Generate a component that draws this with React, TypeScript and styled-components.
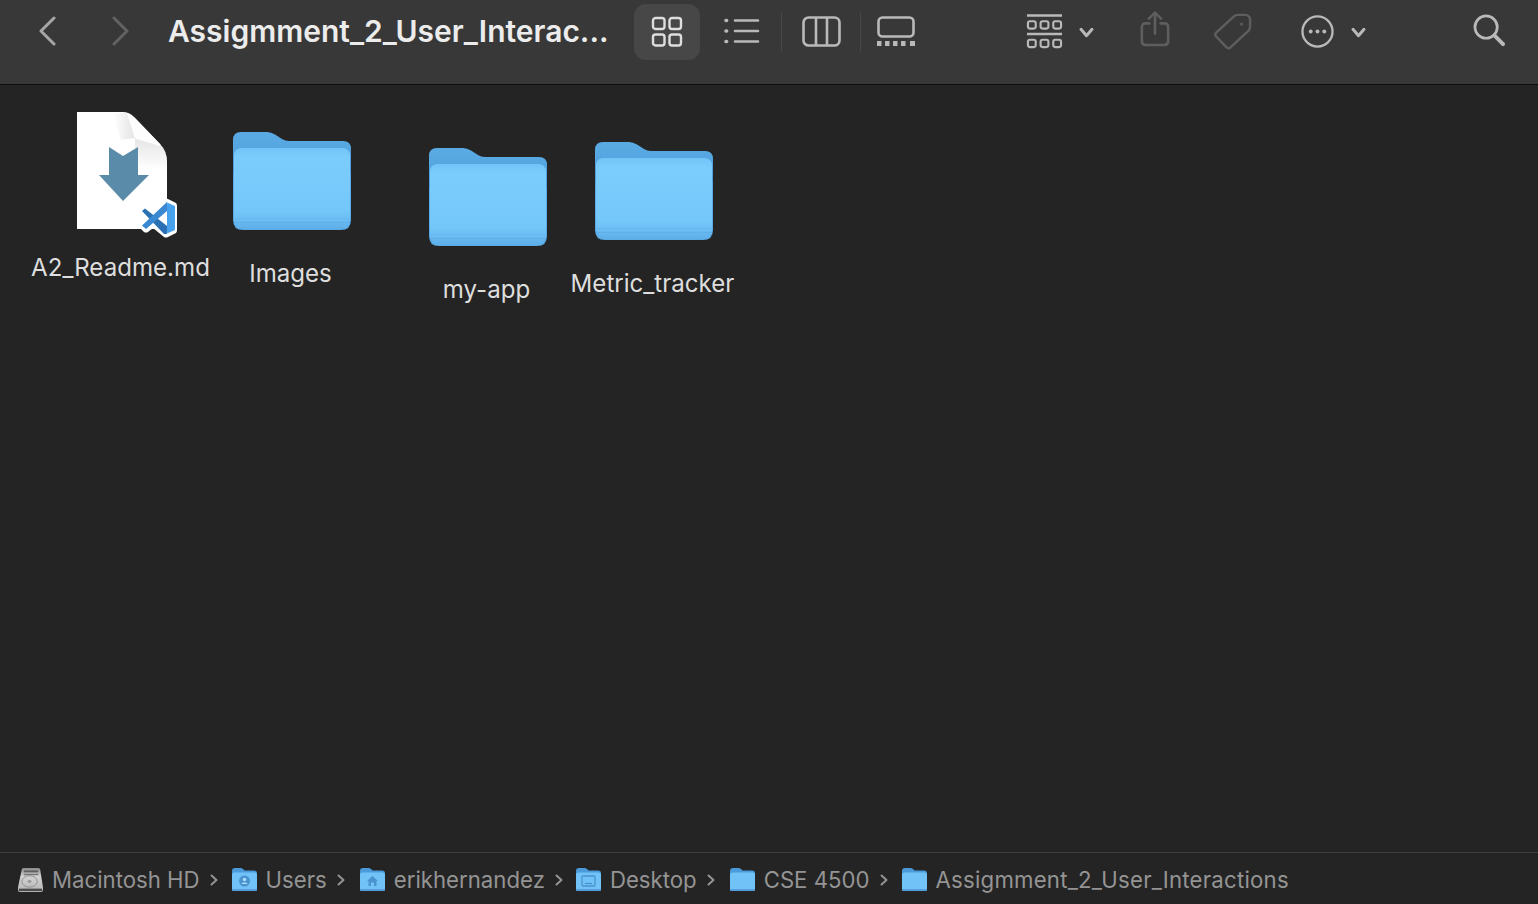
import React from 'react'
import styled, { createGlobalStyle } from 'styled-components'

const GlobalStyle = createGlobalStyle`
  html, body {
    margin: 0;
    padding: 0;
    background: #242424;
    font-family: Inter, "Liberation Sans", sans-serif;
  }
`

const Window = styled.div`
  width: 1538px;
  height: 904px;
  display: flex;
  flex-direction: column;
  overflow: hidden;
  background: #242424;
`

const Toolbar = styled.div`
  height: 85px;
  flex: none;
  box-sizing: border-box;
  display: flex;
  align-items: flex-start;
  background: #383838;
  border-bottom: 1px solid #0c0c0c;
`

const ToolSlot = styled.div<{ $left: number; $top: number }>`
  flex: none;
  display: flex;
  margin-left: ${(p) => p.$left}px;
  margin-top: ${(p) => p.$top}px;
`

const Title = styled.div`
  flex: none;
  width: 442px;
  margin-left: 37px;
  margin-top: 12px;
  font-size: 30px;
  line-height: 38px;
  font-weight: 600;
  color: #ececec;
  white-space: nowrap;
`

const ViewButton = styled.div`
  flex: none;
  width: 66px;
  height: 56px;
  margin-left: 24px;
  margin-top: 4px;
  border-radius: 12px;
  background: #474747;
  display: flex;
  align-items: center;
  justify-content: center;
`

const Divider = styled.div<{ $left: number }>`
  flex: none;
  width: 1px;
  height: 40px;
  margin-left: ${(p) => p.$left}px;
  margin-top: 12px;
  background: #484848;
`

const Canvas = styled.div`
  flex: 1;
  position: relative;
  background: #242424;
`

const FileItem = styled.div<{ $x: number; $y: number }>`
  position: absolute;
  left: ${(p) => p.$x}px;
  top: ${(p) => p.$y}px;
  width: 200px;
  display: flex;
  flex-direction: column;
  align-items: center;
`

const IconHolder = styled.div<{ $shift: number }>`
  display: flex;
  margin-left: ${(p) => p.$shift}px;
`

const FileLabel = styled.div<{ $gap: number }>`
  margin-top: ${(p) => p.$gap}px;
  margin-left: 1px;
  font-size: 24.1px;
  line-height: 30px;
  color: #dedede;
  white-space: nowrap;
`

const PathBar = styled.div`
  height: 52px;
  flex: none;
  box-sizing: border-box;
  display: flex;
  align-items: center;
  padding-left: 18px;
  padding-top: 2px;
  background: #242424;
  border-top: 1px solid #3e3e3e;
`

const Crumb = styled.div<{ $gap: number }>`
  display: flex;
  align-items: center;
  margin-right: ${(p) => p.$gap}px;
`

const CrumbText = styled.span<{ $spacing: number }>`
  margin-left: 9px;
  font-size: 22.2px;
  letter-spacing: ${(p) => p.$spacing}px;
  line-height: 30px;
  color: #949494;
  white-space: nowrap;
`

const CrumbArrow = styled.svg`
  margin-left: 10px;
  flex: none;
`

const stroke = '#b9b9b9'
const dim = '#5e5e5e'

const Chevron = ({ dir, color }: { dir: 'left' | 'right'; color: string }) => (
  <svg width="20" height="30" viewBox="0 0 20 30" fill="none">
    <path d={dir === 'left' ? 'M17 2 L4 15 L17 28' : 'M3 2 L16 15 L3 28'} stroke={color} strokeWidth="3" strokeLinecap="round" strokeLinejoin="round" />
  </svg>
)

const GridIcon = () => (
  <svg width="32" height="32" viewBox="0 0 32 32" fill="none" stroke="#dedede" strokeWidth="2.4">
    <rect x="2" y="2" width="11.5" height="11" rx="2.5" />
    <rect x="18.5" y="2" width="11.5" height="11" rx="2.5" />
    <rect x="2" y="18.5" width="11.5" height="11" rx="2.5" />
    <rect x="18.5" y="18.5" width="11.5" height="11" rx="2.5" />
  </svg>
)

const ListIcon = () => (
  <svg width="36" height="28" viewBox="0 0 36 28" fill="none" stroke={stroke} strokeWidth="2.6" strokeLinecap="round">
    <path d="M11 3.5 H34 M11 14 H34 M11 24.5 H34" />
    <path d="M2 3.5 H2.6 M2 14 H2.6 M2 24.5 H2.6" strokeWidth="3.6" />
  </svg>
)

const ColumnsIcon = () => (
  <svg width="39" height="31" viewBox="0 0 39 31" fill="none" stroke={stroke} strokeWidth="2.6">
    <rect x="1.5" y="1.5" width="36" height="28" rx="5" />
    <path d="M14 1.5 V29.5 M25 1.5 V29.5" />
  </svg>
)

const GalleryIcon = () => (
  <svg width="38" height="30" viewBox="0 0 38 30" fill="none">
    <rect x="1.5" y="1.5" width="35" height="19" rx="4" stroke={stroke} strokeWidth="2.6" />
    <g fill={stroke}>
      <rect x="0" y="25" width="4.5" height="5" />
      <rect x="8" y="25" width="4.5" height="5" />
      <rect x="16" y="25" width="4.5" height="5" />
      <rect x="24" y="25" width="4.5" height="5" />
      <rect x="33" y="25" width="5" height="5" />
    </g>
  </svg>
)

const GroupIcon = () => (
  <svg width="37" height="36" viewBox="0 0 38 36" fill="none" stroke={stroke} strokeWidth="2.2">
    <path d="M1 2 H37 M1 21 H37" strokeWidth="2.6" />
    <rect x="2" y="8" width="8" height="7.5" rx="2" />
    <rect x="15" y="8" width="8" height="7.5" rx="2" />
    <rect x="28" y="8" width="8" height="7.5" rx="2" />
    <rect x="2" y="27" width="8" height="7.5" rx="2" />
    <rect x="15" y="27" width="8" height="7.5" rx="2" />
    <rect x="28" y="27" width="8" height="7.5" rx="2" />
  </svg>
)

const SmallChevron = () => (
  <svg width="15" height="11" viewBox="0 0 16 12" fill="none">
    <path d="M2 2.5 L8 9.5 L14 2.5" stroke={stroke} strokeWidth="3.2" strokeLinecap="round" strokeLinejoin="round" />
  </svg>
)

const ShareIcon = () => (
  <svg width="30" height="36" viewBox="0 0 32 38" fill="none" stroke={dim} strokeWidth="2.8" strokeLinecap="round" strokeLinejoin="round">
    <path d="M10 13 H6 Q2 13 2 17 V32 Q2 36 6 36 H26 Q30 36 30 32 V17 Q30 13 26 13 H22" />
    <path d="M16 24 V2 M9.5 8 L16 1.5 L22.5 8" />
  </svg>
)

const TagIcon = () => (
  <svg width="38" height="37" viewBox="0 0 40 38" fill="none" stroke={dim} strokeWidth="2.6" strokeLinejoin="round">
    <path d="M25 1.5 L33 1.5 Q37.5 2 38 6 L38 14 Q38 16 36.5 18 L17 36 Q15 37.5 13 35.5 L2 24 Q0.5 22 2.5 20 L21 3 Q23 1.5 25 1.5 Z" />
    <circle cx="29" cy="11" r="1.6" fill={dim} stroke="none" />
  </svg>
)

const MoreIcon = () => (
  <svg width="33" height="33" viewBox="0 0 34 34" fill="none">
    <circle cx="17" cy="17" r="15.5" stroke={stroke} strokeWidth="2.4" />
    <circle cx="10" cy="17" r="2" fill={stroke} />
    <circle cx="17" cy="17" r="2" fill={stroke} />
    <circle cx="24" cy="17" r="2" fill={stroke} />
  </svg>
)

const SearchIcon = () => (
  <svg width="33" height="33" viewBox="0 0 34 34" fill="none" stroke={stroke} strokeLinecap="round">
    <circle cx="13.5" cy="13.5" r="11.5" strokeWidth="2.8" />
    <path d="M22 22 L31 31" strokeWidth="4" />
  </svg>
)

const Folder = () => (
  <svg width="118" height="98" viewBox="0 0 118 98">
    <defs>
      <linearGradient id="folderFront" x1="0" y1="0" x2="0" y2="1">
        <stop offset="0" stopColor="#72c4f8" />
        <stop offset="0.12" stopColor="#7acdfc" />
        <stop offset="0.78" stopColor="#74c7f9" />
        <stop offset="0.88" stopColor="#6cbef4" />
        <stop offset="1" stopColor="#5eaee8" />
      </linearGradient>
      <linearGradient id="folderBack" x1="0" y1="0" x2="0" y2="1">
        <stop offset="0" stopColor="#5aabe4" />
        <stop offset="1" stopColor="#4f9edb" />
      </linearGradient>
    </defs>
    <path
      d="M0 8 Q0 0 8 0 H34 Q38 0 42 2.5 L49 7 Q52 9 56 9 H110 Q118 9 118 17 V40 H0 Z"
      fill="url(#folderBack)"
    />
    <path d="M0 40 H118 V88 Q118 98 108 98 H10 Q0 98 0 88 Z" fill="#5aaae5" />
    <path
      d="M1 24 Q1 16 9 16 H109 Q117 16 117 24 V87 Q117 97 107 97 H11 Q1 97 1 87 Z"
      fill="url(#folderFront)"
    />
    <rect x="1" y="86" width="116" height="1" fill="#62b2ec" opacity="0.6" />
    <rect x="1" y="90" width="116" height="1" fill="#5aaae5" opacity="0.6" />
  </svg>
)

const ReadmeIcon = () => (
  <svg width="100" height="126" viewBox="0 0 100 126">
    <defs>
      <linearGradient id="docSide" x1="0" y1="0" x2="1" y2="0">
        <stop offset="0" stopColor="#ffffff" />
        <stop offset="1" stopColor="#d8d8d8" />
      </linearGradient>
      <linearGradient id="docUnder" x1="0" y1="0" x2="0" y2="1">
        <stop offset="0" stopColor="#cfcfcf" />
        <stop offset="1" stopColor="#ffffff" />
      </linearGradient>
    </defs>
    <path d="M0 0 H46 Q52 0 57 5 L82 31 Q90 39 90 50 V117 H0 Z" fill="#ffffff" />
    <path d="M36 1 H50 L58 26 L44 28 Z" fill="url(#docSide)" opacity="0.7" />
    <path d="M58 26 L86 35 Q90 42 90 50 V58 H58 Z" fill="url(#docUnder)" opacity="0.55" />
    <path d="M50 1 Q54 2 58 6 L84 33 Q70 30 62 28 Q57 27 56 20 Q55 10 50 1 Z" fill="#fdfdfd" />
    <path d="M32 35 L46 44 L61 35 V63 H72 L46 89 L22 63 H32 Z" fill="#5a8ba8" />
    <path
      d="M87 87 Q89 86 91 87 L99 91 Q100 92 100 94 V118 Q100 120 99 121 L91 125 Q89 126 87 125 L76 116 L71 120 Q69 121 67 120 L64 117 Q62 115 64 113 L69 107 L63 101 Q62 99 64 97 L67 94 Q69 93 71 94 L76 98 Z"
      fill="#ffffff"
    />
    <path d="M65 99 L68 96.5 L90 114 V122 L87 122 Z" fill="#2a70b2" />
    <path d="M90 90 V99 L69 117 L65 113.5 Z" fill="#3a88d2" />
    <path d="M89 90 L98 94 V118 L89 122 Q91 120 91 118 V94 Q91 92 89 90 Z" fill="#4aa5f0" />
    <path d="M90 92 L97.5 94.5 V117.5 L90 120 Z" fill="#47a1ec" />
  </svg>
)

const MiniFolder = ({ glyph }: { glyph?: 'user' | 'home' | 'desktop' }) => (
  <svg width="25" height="23" viewBox="0 0 25 23">
    <path d="M0 3 Q0 0 3 0 H8 Q10 0 11 1 L12.5 2.5 H22 Q25 2.5 25 5 V10 H0 Z" fill="#4b9bdb" />
    <path d="M0 7 Q0 4.5 2.5 4.5 H22.5 Q25 4.5 25 7 V20.5 Q25 23 22.5 23 H2.5 Q0 23 0 20.5 Z" fill="#71c3f7" />
    <rect x="0" y="21" width="25" height="2" rx="1" fill="#559fdc" />
    {glyph === 'user' && (
      <g>
        <circle cx="12.5" cy="13" r="5.5" fill="#4a93cf" />
        <circle cx="12.5" cy="11.5" r="1.8" fill="#a8dcfb" />
        <path d="M9 16 Q12.5 12.5 16 16 Z" fill="#a8dcfb" />
      </g>
    )}
    {glyph === 'home' && <path d="M12.5 8 L18 13 H16.5 V18 H14 V14.5 H11 V18 H8.5 V13 H7 Z" fill="#4a93cf" />}
    {glyph === 'desktop' && (
      <g fill="none" stroke="#4a93cf" strokeWidth="1.3">
        <rect x="6" y="8" width="13" height="10" rx="1" />
        <path d="M9 15.5 H16" />
      </g>
    )}
  </svg>
)

const DriveIcon = () => (
  <svg width="25" height="24" viewBox="0 0 26 25">
    <defs>
      <linearGradient id="driveBody" x1="0" y1="0" x2="0" y2="1">
        <stop offset="0" stopColor="#8a8a8a" />
        <stop offset="0.35" stopColor="#d2d2d2" />
        <stop offset="1" stopColor="#b4b4b4" />
      </linearGradient>
    </defs>
    <path d="M4 1 Q4.5 0 6 0 H21 Q22.5 0 23 1 L26 20 V23 Q26 25 24 25 H2 Q0 25 0 23 V20 Z" fill="url(#driveBody)" />
    <rect x="6" y="2.5" width="15" height="2" fill="#5f5f5f" />
    <rect x="6" y="6" width="15" height="1.5" fill="#777777" />
    <ellipse cx="12" cy="14" rx="8" ry="6" fill="none" stroke="#8f8f8f" strokeWidth="1" />
    <ellipse cx="12" cy="14" rx="2" ry="1.5" fill="#9a9a9a" />
    <rect x="1" y="21.5" width="24" height="2.5" fill="#4c4c4c" />
  </svg>
)

const Arrow = () => (
  <CrumbArrow width="8" height="12" viewBox="0 0 8 12" fill="none">
    <path d="M1.5 1.5 L6.5 6 L1.5 10.5" stroke="#949494" strokeWidth="2" strokeLinecap="round" strokeLinejoin="round" />
  </CrumbArrow>
)

const files = [
  { name: 'A2_Readme.md', x: 20, y: 27, shift: 13, gap: 15, doc: true },
  { name: 'Images', x: 190, y: 47, shift: 3, gap: 29, doc: false },
  { name: 'my-app', x: 386, y: 63, shift: 3, gap: 29, doc: false },
  { name: 'Metric_tracker', x: 552, y: 57, shift: 3, gap: 29, doc: false },
]

const crumbs = [
  { name: 'Macintosh HD', icon: <DriveIcon />, gap: 14, spacing: 0 },
  { name: 'Users', icon: <MiniFolder glyph="user" />, gap: 15, spacing: 0 },
  { name: 'erikhernandez', icon: <MiniFolder glyph="home" />, gap: 13, spacing: 0 },
  { name: 'Desktop', icon: <MiniFolder glyph="desktop" />, gap: 15, spacing: 0 },
  { name: 'CSE 4500', icon: <MiniFolder />, gap: 14, spacing: 0 },
  { name: 'Assigmment_2_User_Interactions', icon: <MiniFolder />, gap: 0, spacing: 0.23 },
]

const App: React.FC = () => {
  return (
    <Window>
      <GlobalStyle />
      <Toolbar>
        <ToolSlot $left={37} $top={16}><Chevron dir="left" color="#a6a6a6" /></ToolSlot>
        <ToolSlot $left={54} $top={16}><Chevron dir="right" color="#626262" /></ToolSlot>
        <Title>Assigmment_2_User_Interac...</Title>
        <ViewButton><GridIcon /></ViewButton>
        <ToolSlot $left={24} $top={17}><ListIcon /></ToolSlot>
        <Divider $left={21} />
        <ToolSlot $left={20} $top={16}><ColumnsIcon /></ToolSlot>
        <Divider $left={19} />
        <ToolSlot $left={16} $top={16}><GalleryIcon /></ToolSlot>
        <ToolSlot $left={111} $top={13}><GroupIcon /></ToolSlot>
        <ToolSlot $left={16} $top={27}><SmallChevron /></ToolSlot>
        <ToolSlot $left={46} $top={11}><ShareIcon /></ToolSlot>
        <ToolSlot $left={44} $top={13}><TagIcon /></ToolSlot>
        <ToolSlot $left={49} $top={15}><MoreIcon /></ToolSlot>
        <ToolSlot $left={17} $top={27}><SmallChevron /></ToolSlot>
        <ToolSlot $left={107} $top={14}><SearchIcon /></ToolSlot>
      </Toolbar>
      <Canvas>
        {files.map((f) => (
          <FileItem key={f.name} $x={f.x} $y={f.y}>
            <IconHolder $shift={f.shift}>{f.doc ? <ReadmeIcon /> : <Folder />}</IconHolder>
            <FileLabel $gap={f.gap}>{f.name}</FileLabel>
          </FileItem>
        ))}
      </Canvas>
      <PathBar>
        {crumbs.map((c, i) => (
          <Crumb key={c.name} $gap={c.gap}>
            {c.icon}
            <CrumbText $spacing={c.spacing}>{c.name}</CrumbText>
            {i < crumbs.length - 1 && <Arrow />}
          </Crumb>
        ))}
      </PathBar>
    </Window>
  )
}

export default App
